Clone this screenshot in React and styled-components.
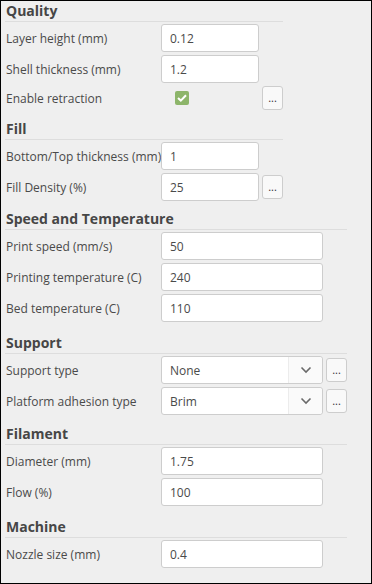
import React from 'react';
import styled, { createGlobalStyle } from 'styled-components';

const GlobalStyle = createGlobalStyle`
  html, body {
    margin: 0;
    padding: 0;
    background: #efefef;
  }

  body {
    font-family: 'Open Sans', 'Noto Sans', sans-serif;
  }
`;

const sections = [
  {
    title: 'Quality',
    top: 0,
    width: 98,
    rows: [
      { label: 'Layer height (mm)', value: '0.12' },
      { label: 'Shell thickness (mm)', value: '1.2' },
      { label: 'Enable retraction', check: true, more: true },
    ],
  },
  {
    title: 'Fill',
    top: 9,
    width: 98,
    rows: [
      { label: 'Bottom/Top thickness (mm)', value: '1' },
      { label: 'Fill Density (%)', value: '25', more: true },
    ],
  },
  {
    title: 'Speed and Temperature',
    top: 8,
    width: 162,
    rows: [
      { label: 'Print speed (mm/s)', value: '50' },
      { label: 'Printing temperature (C)', value: '240' },
      { label: 'Bed temperature (C)', value: '110' },
    ],
  },
  {
    title: 'Support',
    top: 11,
    width: 162,
    rows: [
      { label: 'Support type', select: 'None', more: true },
      { label: 'Platform adhesion type', select: 'Brim', more: true },
    ],
  },
  {
    title: 'Filament',
    top: 9,
    width: 162,
    rows: [
      { label: 'Diameter (mm)', value: '1.75' },
      { label: 'Flow (%)', value: '100' },
    ],
  },
  {
    title: 'Machine',
    top: 11,
    width: 162,
    rows: [{ label: 'Nozzle size (mm)', value: '0.4' }],
  },
];

const Chevron = () => (
  <svg width="12" height="8" viewBox="0 0 12 8">
    <path d="M1.5 1.5 L6 6 L10.5 1.5" fill="none" stroke="#6a6a6a" strokeWidth="1.6" />
  </svg>
);

const Tick = () => (
  <svg width="10" height="8" viewBox="0 0 10 8">
    <path d="M1 4 L3.8 6.6 L9 1.2" fill="none" stroke="#fff" strokeWidth="2" />
  </svg>
);

const App = () => {
  const renderControl = (row, width) => {
    if (row.check) {
      return (
        <CheckCell>
          <CheckBox>
            <Tick />
          </CheckBox>
        </CheckCell>
      );
    }
    if (row.select) {
      return (
        <Select style={{ width }}>
          <span>{row.select}</span>
          <SelectArrow>
            <Chevron />
          </SelectArrow>
        </Select>
      );
    }
    return <Input style={{ width }} readOnly value={row.value} />;
  };

  return (
    <>
      <GlobalStyle />
      <Frame>
        {sections.map((section) => (
          <Section key={section.title} $top={section.top}>
            <Heading>{section.title}</Heading>
            <Rows>
              {section.rows.map((row) => (
                <Row key={row.label} $width={section.width}>
                  <Label>{row.label}</Label>
                  {renderControl(row, section.width)}
                  {row.more ? <MoreButton>...</MoreButton> : <span />}
                </Row>
              ))}
            </Rows>
          </Section>
        ))}
      </Frame>
    </>
  );
};

export default App;

const Frame = styled.div`
  box-sizing: border-box;
  width: 372px;
  height: 584px;
  border: 1px solid #000;
  padding: 0 0 0 4px;
  overflow: hidden;
`;

const Section = styled.section`
  width: fit-content;
  padding-right: 3px;
  margin-top: ${(p) => p.$top}px;
`;

const Heading = styled.h3`
  margin: 0;
  height: 20px;
  line-height: 20px;
  font-size: 14px;
  font-weight: bold;
  color: #464646;
  border-bottom: 1px solid #dddddd;
  padding-left: 1px;
`;

const Rows = styled.div`
  display: flex;
  flex-direction: column;
  gap: 3px;
  margin-top: 2px;
`;

const Row = styled.div`
  display: grid;
  grid-template-columns: 153px ${(p) => p.$width}px 21px;
  column-gap: 3px;
  align-items: center;
`;

const Label = styled.span`
  font-size: 12px;
  color: #4a4a4a;
  padding-left: 1px;
  white-space: nowrap;
`;

const Input = styled.input`
  box-sizing: border-box;
  height: 28px;
  margin: 0;
  padding: 0 8px;
  border: 1px solid #cdcdcd;
  border-radius: 3px;
  background: #fff;
  font-family: 'Open Sans', 'Noto Sans', sans-serif;
  font-size: 12px;
  color: #4a4a4a;
  outline: none;
`;

const Select = styled.div`
  box-sizing: border-box;
  height: 28px;
  display: flex;
  align-items: stretch;
  border: 1px solid #cdcdcd;
  border-radius: 3px;
  background: #fff;
  font-size: 12px;
  color: #4a4a4a;

  span {
    flex: 1;
    display: flex;
    align-items: center;
    padding-left: 8px;
  }
`;

const SelectArrow = styled.div`
  width: 33px;
  display: flex;
  align-items: center;
  justify-content: center;
  border-left: 1px solid #ececec;
  background: #fafafa;
  border-radius: 0 3px 3px 0;
`;

const CheckCell = styled.div`
  height: 24px;
  display: flex;
  align-items: center;
  padding-left: 14px;
`;

const CheckBox = styled.div`
  width: 14px;
  height: 14px;
  border-radius: 2px;
  background: #8db56a;
  display: flex;
  align-items: center;
  justify-content: center;
`;

const MoreButton = styled.button`
  box-sizing: border-box;
  width: 21px;
  height: 24px;
  margin: 0;
  padding: 0 0 1px;
  border: 1px solid #cdcdcd;
  border-radius: 3px;
  background: #f9f9f9;
  font-family: 'Open Sans', 'Noto Sans', sans-serif;
  font-size: 11px;
  color: #333;
  line-height: 1;
`;
